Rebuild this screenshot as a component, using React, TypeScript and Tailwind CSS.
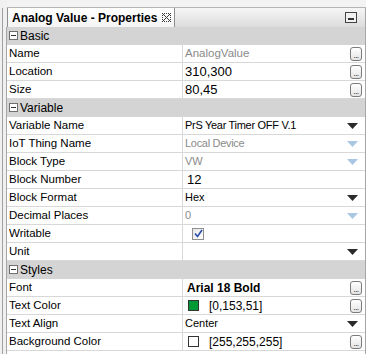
import React from "react"

type Prop = {
  label: string
  value?: React.ReactNode
  right?: "dots" | "arrow" | "arrowOff"
}

type Group = { title: string; rows: Prop[] }

const font = { fontFamily: '"Liberation Sans", Arial, sans-serif' }

const Dots = () => (
  <div className="w-[12px] h-[14px] rounded-[3px] border border-[#7b7b7b] bg-gradient-to-b from-white to-[#e4e4e4] flex items-end justify-center pb-[1px]">
    <span className="text-[8px] leading-[6px] text-black tracking-[-0.5px]">...</span>
  </div>
)

const Arrow = ({ off }: { off?: boolean }) => (
  <svg width="11" height="6" viewBox="0 0 11 6">
    <path d="M0 0 H11 L5.5 6 Z" fill={off ? "#a9c6e3" : "#2b2b2b"} />
  </svg>
)

const Swatch = ({ color }: { color: string }) => (
  <span className="w-[11px] h-[11px] border border-[#333] inline-block mr-[10px]" style={{ background: color }} />
)

// checkered "close" glyph on the tab
const closePixels: [number, number][] = []
for (let y = 0; y < 9; y++)
  for (let x = 0; x < 9; x++) {
    const onX = Math.abs(x - y) <= 1 || Math.abs(x + y - 8) <= 1
    const edge = x === 0 || y === 0 || x === 8 || y === 8
    if ((onX || edge) && (x + y) % 2 === 0) closePixels.push([x, y])
  }

const groups: Group[] = [
  {
    title: "Basic",
    rows: [
      { label: "Name", value: <span className="text-[11.5px] text-[#8a8a8a]">AnalogValue</span>, right: "dots" },
      { label: "Location", value: <span className="text-[13px]">310,300</span>, right: "dots" },
      { label: "Size", value: <span className="text-[13px]">80,45</span>, right: "dots" },
    ],
  },
  {
    title: "Variable",
    rows: [
      { label: "Variable Name", value: <span className="text-[11px] tracking-[-0.3px]">PrS Year Timer OFF V.1</span>, right: "arrow" },
      { label: "IoT Thing Name", value: <span className="text-[11px] text-[#8a8a8a] tracking-[-0.3px]">Local Device</span>, right: "arrowOff" },
      { label: "Block Type", value: <span className="text-[11px] text-[#8a8a8a]">VW</span>, right: "arrowOff" },
      { label: "Block Number", value: <span className="text-[13px] pl-[2px]">12</span> },
      { label: "Block Format", value: <span className="text-[11px]">Hex</span>, right: "arrow" },
      { label: "Decimal Places", value: <span className="text-[11px] text-[#8a8a8a]">0</span>, right: "arrowOff" },
      {
        label: "Writable",
        value: (
          <span className="ml-[7px] w-[12px] h-[12px] border border-[#8e8f8f] bg-gradient-to-br from-[#e6e6e6] to-white flex items-center justify-center">
            <svg width="9" height="9" viewBox="0 0 9 9">
              <path d="M1 4.5 L3.5 7.5 L8 1" fill="none" stroke="#2a4fa8" strokeWidth="1.6" />
            </svg>
          </span>
        ),
      },
      { label: "Unit", right: "arrow" },
    ],
  },
  {
    title: "Styles",
    rows: [
      { label: "Font", value: <span className="text-[12px] font-bold pl-[2px]">Arial 18 Bold</span>, right: "dots" },
      { label: "Text Color", value: <span className="flex items-center pl-[3px] text-[12px]"><Swatch color="#009933" />[0,153,51]</span>, right: "dots" },
      { label: "Text Align", value: <span className="text-[11px]">Center</span>, right: "arrow" },
      { label: "Background Color", value: <span className="flex items-center pl-[3px] text-[12px]"><Swatch color="#ffffff" />[255,255,255]</span>, right: "dots" },
    ],
  },
]

const Header = ({ title }: { title: string }) => (
  <div className="h-[18px] bg-[#d4d4d4] flex items-center pl-[2px] border-b border-[#d4d4d4]">
    <span className="w-[9px] h-[9px] border border-[#6f6f6f] bg-white flex items-center justify-center mr-[2px]">
      <span className="w-[5px] h-px bg-[#333]" />
    </span>
    <span className="text-[12px] text-black">{title}</span>
  </div>
)

const Row = ({ row }: { row: Prop }) => (
  <div className="h-[18px] flex border-b border-[#d8d8d8] bg-white">
    <div className="w-[176px] border-r border-[#d8d8d8] flex items-center pl-[2px] text-[11.5px] text-black">{row.label}</div>
    <div className="flex-1 flex items-center pl-[2px] pr-[3px] text-black">
      <div className="flex-1 flex items-center">{row.value}</div>
      {row.right === "dots" && <Dots />}
      {row.right === "arrow" && <span className="mr-[4px]"><Arrow /></span>}
      {row.right === "arrowOff" && <span className="mr-[4px]"><Arrow off /></span>}
    </div>
  </div>
)

export default function App() {
  return (
    <div className="w-[366px] h-[354px] bg-[#f0f0f0] flex overflow-hidden" style={font}>
      {/* left gutter */}
      <div className="w-[7px] flex flex-col">
        <div className="h-[8px]" />
        <div className="flex-1 ml-[2px] w-[2px] border-l border-[#a0a0a0]" />
      </div>

      <div className="flex-1 flex flex-col">
        <div className="h-[7px] bg-[#f3f3f3]" />

        {/* tab strip */}
        <div className="h-[20px] flex border-t border-[#b5b5b5]">
          <div className="w-[168px] shrink-0 border-l border-r border-[#8e8e8e] bg-gradient-to-b from-white to-[#f4f4f4] flex items-center pl-[4px] whitespace-nowrap">
            <span className="text-[12px] font-bold text-black">Analog Value - Properties</span>
            <svg width="9" height="9" viewBox="0 0 9 9" className="ml-[5px] shrink-0">
              {closePixels.map(([x, y]) => (
                <rect key={`${x}-${y}`} x={x} y={y} width="1" height="1" fill="#3c3c3c" />
              ))}
            </svg>
          </div>
          <div className="flex-1 bg-gradient-to-b from-[#f6f6f6] to-[#dcdcdc] border-r border-[#a6a6a6] flex items-center justify-end pr-[8px]">
            <span className="w-[12px] h-[11px] border border-[#444] bg-[#f0f0f0] flex items-end justify-center pb-[2px]">
              <span className="w-[6px] h-[2px] bg-[#333]" />
            </span>
          </div>
        </div>

        <div className="flex-1 border-r border-[#a6a6a6] border-l border-[#8e8e8e] bg-white -ml-px">
          {groups.map(g => (
            <div key={g.title}>
              <Header title={g.title} />
              {g.rows.map(r => <Row key={r.label} row={r} />)}
            </div>
          ))}
        </div>
      </div>
    </div>
  )
}
